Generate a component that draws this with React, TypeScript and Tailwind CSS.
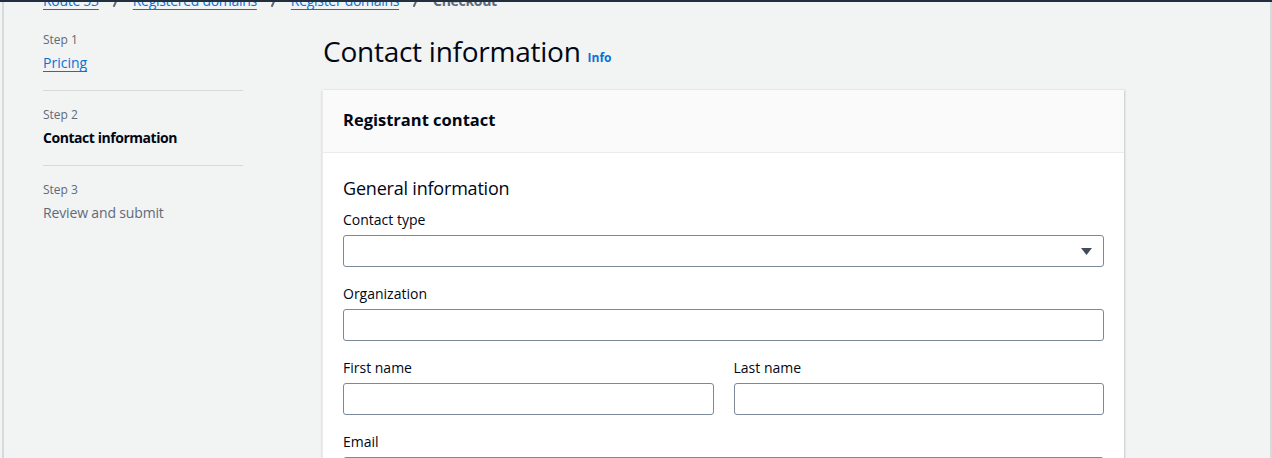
import React from 'react';

const font = { fontFamily: '"Open Sans", "Liberation Sans", Arial, sans-serif' };

const steps = [
  { step: 'Step 1', name: 'Pricing', state: 'link' },
  { step: 'Step 2', name: 'Contact information', state: 'active' },
  { step: 'Step 3', name: 'Review and submit', state: 'disabled' },
];

const crumbs = ['Route 53', 'Registered domains', 'Register domains'];

const Chevron = () => (
  <svg width="8" height="12" viewBox="0 0 8 12" className="mx-[13px]">
    <path d="M2 11 L6.5 1" stroke="#5f6b7a" strokeWidth="2" fill="none" strokeLinecap="round" />
  </svg>
);

const Field: React.FC<{ label: string; select?: boolean; className?: string }> = ({ label, select, className }) => (
  <div className={className}>
    <div className="text-[14px] leading-[20px] text-[#000716]">{label}</div>
    <div className="relative mt-[5px] h-[32px] rounded-[3px] border border-[#7d8998] bg-white">
      {select && (
        <svg width="11" height="7" viewBox="0 0 11 7" className="absolute right-[11px] top-[12px]">
          <path d="M0 0 H11 L5.5 7 Z" fill="#414d5c" />
        </svg>
      )}
    </div>
  </div>
);

export default function App() {
  return (
    <div style={font} className="relative h-[458px] w-[1272px] overflow-hidden bg-[#f2f3f3]">
      <div className="relative z-10 h-[2px] bg-[#232f3e]" />
      <div className="absolute left-[2px] top-0 h-full w-[2px] bg-[#d5dbdb]" />
      <div className="absolute right-0 top-0 h-full w-[2px] bg-[#d5dbdb]" />

      <div className="-mt-[11px] flex items-center pl-[43px] text-[14px] leading-[20px] tracking-[-0.3px]">
        {crumbs.map((c) => (
          <React.Fragment key={c}>
            <span className="text-[#0972d3] underline decoration-1 underline-offset-[3px]">{c}</span>
            <Chevron />
          </React.Fragment>
        ))}
        <span className="font-bold text-[#5f6b7a]">Checkout</span>
      </div>

      <div className="mt-[21px] flex">
        <nav className="ml-[43px] w-[200px] shrink-0">
          {steps.map((s, i) => (
            <div
              key={s.step}
              className={`${i > 0 ? 'pt-[16px]' : ''} ${i < steps.length - 1 ? 'border-b border-[#d5dbdb] pb-[17px]' : ''}`}
            >
              <div className="text-[12px] leading-[16px] text-[#5f6b7a]">{s.step}</div>
              <div
                className={`mt-[5px] text-[14px] leading-[20px] ${
                  s.state === 'link'
                    ? 'text-[#0972d3] underline decoration-1 underline-offset-[3px]'
                    : s.state === 'active'
                    ? 'font-bold tracking-[-0.45px] text-[#000716]'
                    : 'tracking-[-0.15px] text-[#5f6b7a]'
                }`}
              >
                {s.name}
              </div>
            </div>
          ))}
        </nav>

        <main className="ml-[79px] mt-[1px] w-[802px]">
          <div className="flex items-baseline pl-[1px]">
            <h1 className="text-[28px] leading-[36px] font-normal tracking-[-0.25px] text-[#000716]">Contact information</h1>
            <span className="ml-[7px] text-[12px] font-bold text-[#0972d3]">Info</span>
          </div>

          <div className="mt-[21px] border-l border-[#e9ebed] bg-white shadow-[0_1px_2px_rgba(0,7,22,0.15),1px_0_2px_rgba(0,7,22,0.12)]">
            <div className="border-b border-[#e9ebed] bg-[#fafafa] px-[20px] pb-[21px] pt-[19px]">
              <h2 className="text-[16.5px] leading-[22px] font-bold text-[#000716]">Registrant contact</h2>
            </div>
            <div className="px-[20px] pt-[24px] pb-[40px]">
              <h3 className="text-[18px] leading-[22px] tracking-[-0.2px] text-[#000716]">General information</h3>
              <Field label="Contact type" select className="mt-[11px]" />
              <Field label="Organization" className="mt-[17px]" />
              <div className="mt-[17px] grid grid-cols-2 gap-[20px]">
                <Field label="First name" />
                <Field label="Last name" />
              </div>
              <Field label="Email" className="mt-[17px]" />
            </div>
          </div>
        </main>
      </div>
    </div>
  );
}
